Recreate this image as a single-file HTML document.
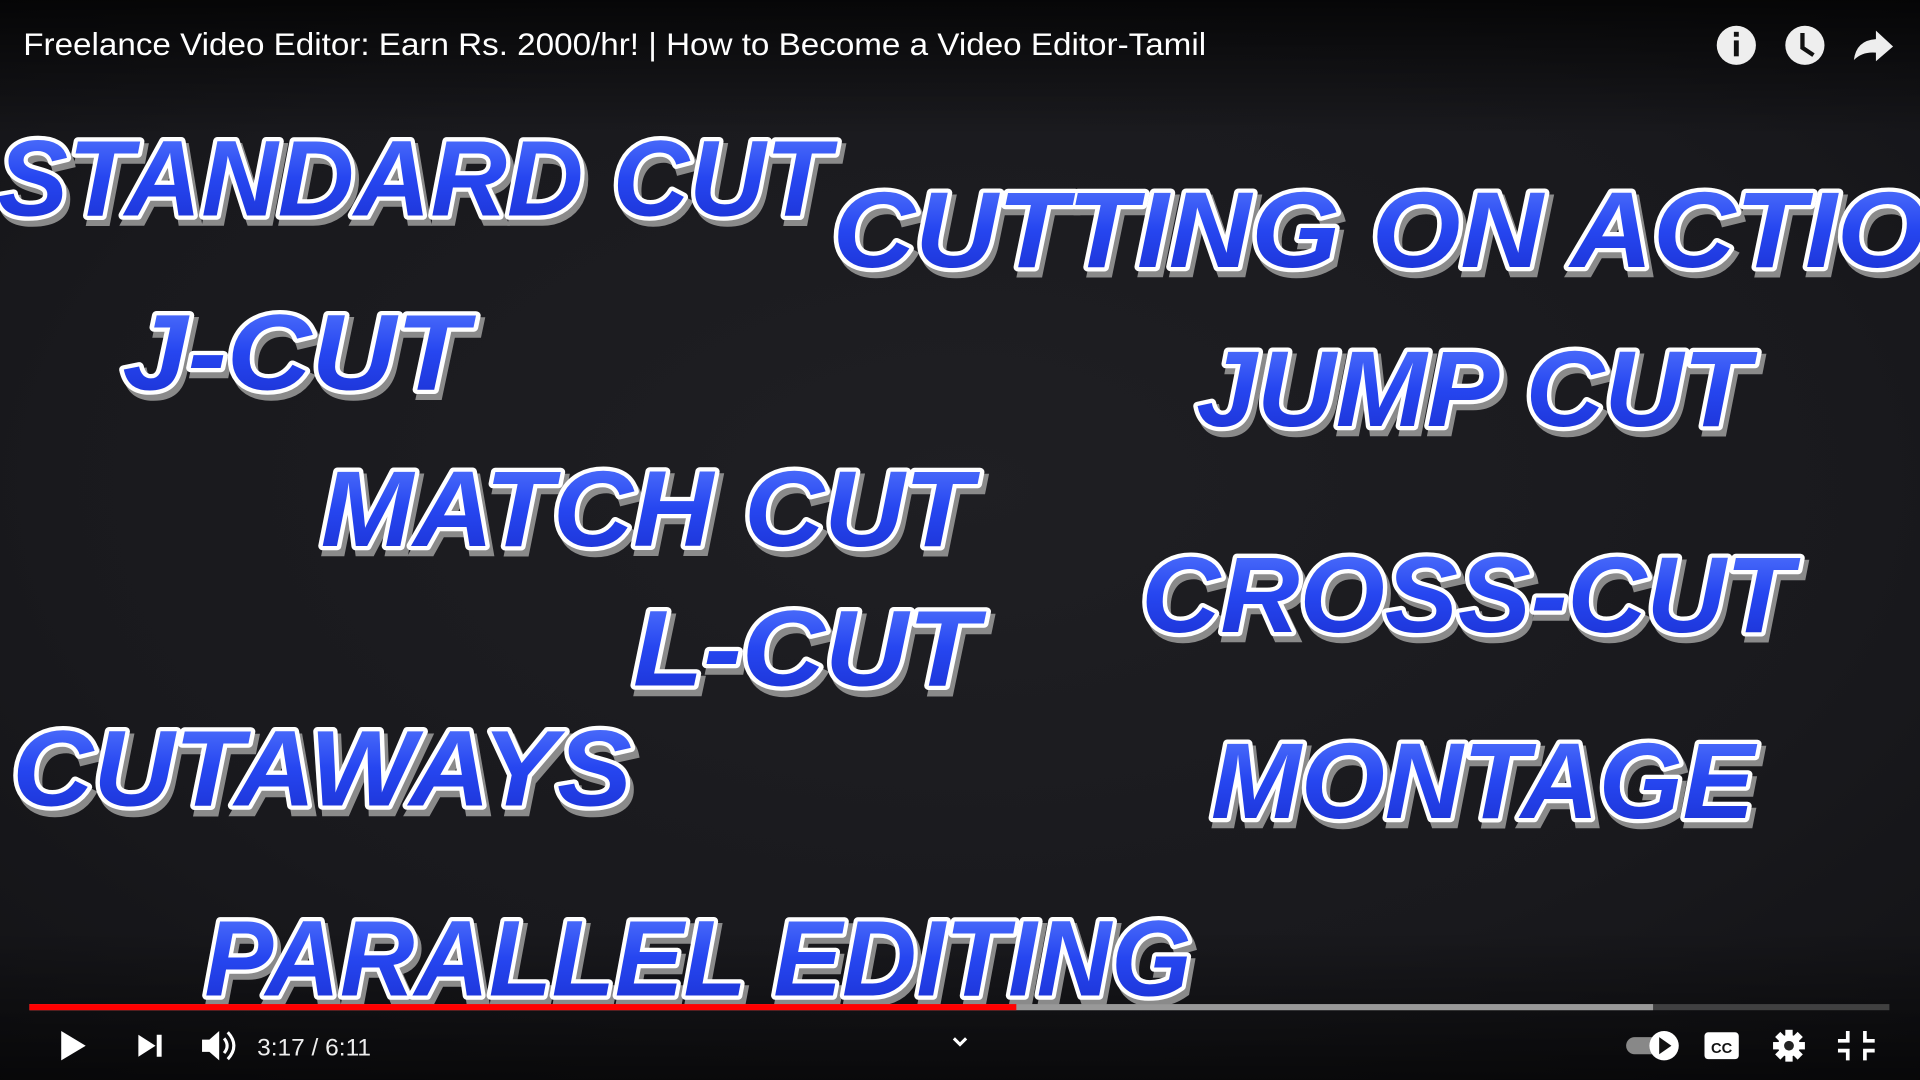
<!DOCTYPE html>
<html><head><meta charset="utf-8"><style>
html,body{margin:0;padding:0;width:1920px;height:1080px;overflow:hidden;background:#19191c}
svg{display:block}
</style></head><body>
<svg width="1920" height="1080" viewBox="0 0 1568 882" xmlns="http://www.w3.org/2000/svg">
<defs>
<linearGradient id="bl" x1="0" y1="0" x2="0" y2="1">
<stop offset="0" stop-color="#5a7cff"/><stop offset="0.5" stop-color="#2646f0"/><stop offset="1" stop-color="#1a2fd0"/>
</linearGradient>
<radialGradient id="bg" cx="0.5" cy="0.45" r="0.8">
<stop offset="0" stop-color="#1f1f23"/><stop offset="0.6" stop-color="#19191d"/><stop offset="1" stop-color="#111114"/>
</radialGradient>
<linearGradient id="top" x1="0" y1="0" x2="0" y2="1">
<stop offset="0" stop-color="#000" stop-opacity="0.75"/><stop offset="1" stop-color="#000" stop-opacity="0"/>
</linearGradient>
<linearGradient id="bot" x1="0" y1="0" x2="0" y2="1">
<stop offset="0" stop-color="#000" stop-opacity="0"/><stop offset="1" stop-color="#000" stop-opacity="0.6"/>
</linearGradient>
</defs>
<rect width="1568" height="882" fill="url(#bg)"/>
<rect width="1568" height="110" fill="url(#top)"/>
<rect y="760" width="1568" height="122" fill="url(#bot)"/>

<g font-family="Liberation Sans, sans-serif" font-weight="bold" font-style="italic" font-size="88">
<g fill="#9a9a9a" stroke="#8a8a8a" stroke-width="7" transform="translate(3,5)">
<text x="-2" y="176" textLength="680" lengthAdjust="spacingAndGlyphs">STANDARD CUT</text>
<text x="680" y="218" textLength="960" lengthAdjust="spacingAndGlyphs">CUTTING ON ACTION</text>
<text x="100" y="318" textLength="282" lengthAdjust="spacingAndGlyphs">J-CUT</text>
<text x="977" y="348" textLength="452" lengthAdjust="spacingAndGlyphs">JUMP CUT</text>
<text x="262" y="446" textLength="532" lengthAdjust="spacingAndGlyphs">MATCH CUT</text>
<text x="932" y="516" textLength="532" lengthAdjust="spacingAndGlyphs">CROSS-CUT</text>
<text x="517" y="560" textLength="282" lengthAdjust="spacingAndGlyphs">L-CUT</text>
<text x="10" y="658" textLength="506" lengthAdjust="spacingAndGlyphs">CUTAWAYS</text>
<text x="989" y="668" textLength="444" lengthAdjust="spacingAndGlyphs">MONTAGE</text>
<text x="167" y="813" textLength="806" lengthAdjust="spacingAndGlyphs">PARALLEL EDITING</text>
</g>
<g fill="url(#bl)" stroke="#fff" stroke-width="7" paint-order="stroke" stroke-linejoin="round">
<text x="-2" y="176" textLength="680" lengthAdjust="spacingAndGlyphs">STANDARD CUT</text>
<text x="680" y="218" textLength="960" lengthAdjust="spacingAndGlyphs">CUTTING ON ACTION</text>
<text x="100" y="318" textLength="282" lengthAdjust="spacingAndGlyphs">J-CUT</text>
<text x="977" y="348" textLength="452" lengthAdjust="spacingAndGlyphs">JUMP CUT</text>
<text x="262" y="446" textLength="532" lengthAdjust="spacingAndGlyphs">MATCH CUT</text>
<text x="932" y="516" textLength="532" lengthAdjust="spacingAndGlyphs">CROSS-CUT</text>
<text x="517" y="560" textLength="282" lengthAdjust="spacingAndGlyphs">L-CUT</text>
<text x="10" y="658" textLength="506" lengthAdjust="spacingAndGlyphs">CUTAWAYS</text>
<text x="989" y="668" textLength="444" lengthAdjust="spacingAndGlyphs">MONTAGE</text>
<text x="167" y="813" textLength="806" lengthAdjust="spacingAndGlyphs">PARALLEL EDITING</text>
</g>
</g>

<text x="19" y="45" fill="#fff" font-family="Liberation Sans, sans-serif" font-size="26" textLength="966" lengthAdjust="spacingAndGlyphs">Freelance Video Editor: Earn Rs. 2000/hr! | How to Become a Video Editor-Tamil</text>

<circle cx="1418" cy="37" r="16" fill="#eee"/>
<rect x="1416" y="33" width="4" height="13" fill="#111"/><rect x="1416" y="26" width="4" height="4" fill="#111"/>
<circle cx="1474" cy="37" r="16" fill="#eee"/>
<path d="M1472 27 V39 L1481 45" fill="none" stroke="#111" stroke-width="3.5"/>
<path d="M1514 49 Q1516 33 1532 32 V25 L1546 38 L1532 50 V43 Q1521 42 1514 49Z" fill="#eee"/>

<rect x="24" y="820" width="1519" height="5" fill="#555" opacity="0.7"/>
<rect x="24" y="820" width="1326" height="5" fill="#999"/>
<rect x="24" y="820" width="806" height="5" fill="#f00"/>

<path d="M50 842 L70 854 L50 866Z" fill="#fff"/>
<path d="M113 845 L127 854 L113 863Z M128 845 h4 v18 h-4z" fill="#fff"/>
<path d="M165 849 h6 l8 -7 v24 l-8 -7 h-6z" fill="#fff"/>
<path d="M183 848 q5 6 0 12 M186 843 q10 11 0 22" fill="none" stroke="#fff" stroke-width="2.5"/>
<text x="210" y="862" fill="#eee" font-family="Liberation Sans, sans-serif" font-size="20">3:17 / 6:11</text>
<path d="M779 848 l5 5 l5 -5" fill="none" stroke="#fff" stroke-width="2.5"/>

<rect x="1328" y="847" width="30" height="14" rx="7" fill="#888"/>
<circle cx="1359" cy="854" r="12" fill="#fff"/>
<path d="M1355 847 L1365 854 L1355 861Z" fill="#111"/>
<rect x="1392" y="843" width="28" height="22" rx="3" fill="#fff"/>
<text x="1406" y="860" text-anchor="middle" fill="#111" font-family="Liberation Sans, sans-serif" font-weight="bold" font-size="12">CC</text>
<g transform="translate(1461,854)">
<circle r="9" fill="#fff"/>
<g fill="#fff"><rect x="-3" y="-13" width="6" height="26"/><rect x="-13" y="-3" width="26" height="6"/>
<rect x="-3" y="-13" width="6" height="26" transform="rotate(45)"/><rect x="-3" y="-13" width="6" height="26" transform="rotate(-45)"/></g>
<circle r="4" fill="#222"/>
</g>
<path d="M1509 842 v8 h-8 M1523 842 v8 h8 M1509 866 v-8 h-8 M1523 866 v-8 h8" fill="none" stroke="#fff" stroke-width="3"/>
</svg>
</body></html>
